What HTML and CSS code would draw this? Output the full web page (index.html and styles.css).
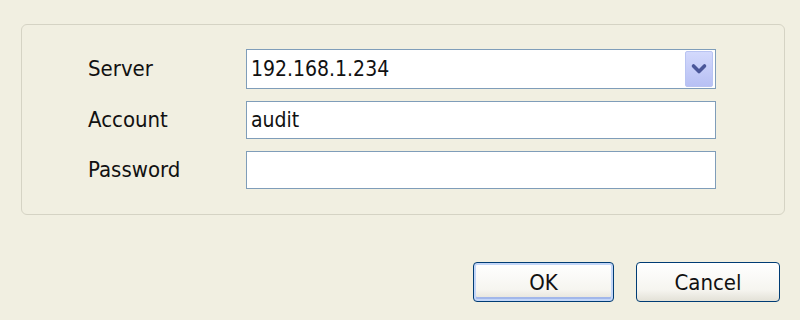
FILE: index.html
```html
<!DOCTYPE html>
<html lang="en">
<head>
  <meta charset="UTF-8" />
  <title>Login</title>
  <link rel="stylesheet" href="styles.css">
</head>
<body>
  <div class="group">
    <div class="form">
      <label>Server</label>
      <div class="field combo">
        <span class="value">192.168.1.234</span>
        <span class="drop">
          <svg width="18" height="12" viewBox="0 0 18 12">
            <path d="M3.5 3 L9 8.5 L14.5 3" fill="none" stroke="#4a5699" stroke-width="3.6" stroke-linecap="round" stroke-linejoin="round"/>
          </svg>
        </span>
      </div>

      <label>Account</label>
      <div class="field"><span class="value">audit</span></div>

      <label>Password</label>
      <div class="field"></div>
    </div>
  </div>

  <div class="buttons">
    <button class="btn default">OK</button>
    <button class="btn">Cancel</button>
  </div>
</body>
</html>
```

FILE: styles.css
```css
body {
  margin: 0;
  background-color: #f1efe1;
  font-family: "DejaVu Sans Condensed", "DejaVu Sans", sans-serif;
  font-stretch: condensed;
  color: #111;
  height: 320px;
}

.group {
  margin: 24px 15px 0 21px;
  border: 1px solid #d5d3c4;
  border-radius: 6px;
  padding: 24px 0 25px 0;
}

.form {
  display: grid;
  grid-template-columns: 158px 470px;
  row-gap: 12px;
  padding-left: 66px;
  align-items: center;
}

label {
  font-size: 22px;
  line-height: 26px;
}

.field {
  height: 36px;
  border: 1px solid #7f9db9;
  background-color: #fff;
  display: flex;
  align-items: center;
  padding-left: 4px;
  font-size: 21px;
}

.combo {
  height: 38px;
  justify-content: space-between;
  padding-right: 2px;
}

.drop {
  width: 26px;
  height: 34px;
  border: 1px solid #b9c4f2;
  border-radius: 2px;
  background: linear-gradient(#d3d9fc, #b7c0f4);
  display: flex;
  align-items: center;
  justify-content: center;
}

.buttons {
  display: flex;
  justify-content: flex-end;
  gap: 22px;
  margin-top: 47px;
  padding-right: 20px;
}

.btn {
  height: 40px;
  width: 144px;
  border: 1px solid #003c74;
  border-radius: 4px;
  background: linear-gradient(#ffffff, #f6f5f0 70%, #e3e1d7);
  font-family: inherit;
  font-stretch: condensed;
  font-size: 22px;
  color: #111;
  padding: 0;
}

.btn.default {
  width: 141px;
  box-shadow: inset 0 0 0 2px #c3d6f8, inset 0 -2px 0 2px #a2b7ea;
}
```
